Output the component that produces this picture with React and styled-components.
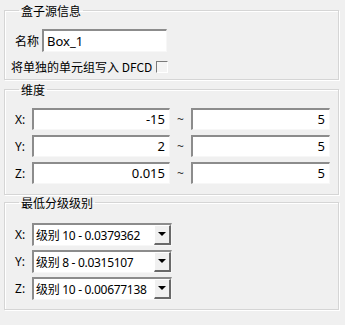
import styled, {createGlobalStyle} from "styled-components";

const GlobalStyle = createGlobalStyle`
  html, body {
    margin: 0;
    padding: 0;
    background: #f0f0f0;
  }
  body {
    font-family: "Noto Sans", "Noto Sans CJK SC", sans-serif;
    font-size: 12px;
    color: #000;
  }
`

const dims = [
    {axis: "X", min: "-15", max: "5"},
    {axis: "Y", min: "2", max: "5"},
    {axis: "Z", min: "0.015", max: "5"},
];

const levels = [
    {axis: "X", value: "级别 10 - 0.0379362"},
    {axis: "Y", value: "级别 8 - 0.0315107"},
    {axis: "Z", value: "级别 10 - 0.00677138"},
];

function App() {
    return (
        <Page>
            <GlobalStyle/>
            <Group $height={78}>
                <Legend>盒子源信息</Legend>
                <NameRow>
                    <Label>名称</Label>
                    <TextBox $width={125} $height={23}>Box_1</TextBox>
                </NameRow>
                <CheckRow>
                    <span>将单独的单元组写入 DFCD</span>
                    <CheckBox/>
                </CheckRow>
            </Group>

            <Group $height={114}>
                <Legend>维度</Legend>
                <Rows $top={10}>
                    {dims.map((d) => (
                        <Row key={d.axis}>
                            <Axis>{d.axis}:</Axis>
                            <TextBox $width={138} $height={22} $right>{d.min}</TextBox>
                            <Tilde>~</Tilde>
                            <TextBox $width={139} $height={22} $right>{d.max}</TextBox>
                        </Row>
                    ))}
                </Rows>
            </Group>

            <Group $height={116} $shift={-2}>
                <Legend>最低分级级别</Legend>
                <Rows $top={12}>
                    {levels.map((l) => (
                        <Row key={l.axis}>
                            <Axis>{l.axis}:</Axis>
                            <Select>
                                <SelectText>{l.value}</SelectText>
                                <DropButton>
                                    <svg width="8" height="4" viewBox="0 0 8 4">
                                        <path d="M0 0h8L4 4z" fill="#000"/>
                                    </svg>
                                </DropButton>
                            </Select>
                        </Row>
                    ))}
                </Rows>
            </Group>
        </Page>
    )
}

export default App

const Page = styled.div`
  width: 345px;
  height: 325px;
  box-sizing: border-box;
  padding: 2px 6px 0 4px;
  display: flex;
  flex-direction: column;
  gap: 1px;
  overflow: hidden;
`
const Group = styled.fieldset`
  margin: ${(p) => p.$shift || 0}px 0 0 0;
  padding: 0 0 0 10px;
  height: ${(p) => p.$height}px;
  box-sizing: border-box;
  border: 1px solid #d5d5d5;
  box-shadow: 1px 1px 0 #fff, inset 1px 1px 0 #fff;
  min-width: 0;
`
const Legend = styled.legend`
  padding: 0 2px;
  margin-left: 4px;
  line-height: 17px;
  font-family: "Noto Sans CJK SC", sans-serif;
  color: #000;
`
const NameRow = styled.div`
  display: flex;
  align-items: center;
  gap: 3px;
  margin-top: 10px;
`
const Label = styled.span`
  font-family: "Noto Sans CJK SC", sans-serif;
`
const TextBox = styled.div`
  width: ${(p) => p.$width}px;
  height: ${(p) => p.$height}px;
  box-sizing: border-box;
  background: #fff;
  border-top: 2px solid #8c8c8c;
  border-left: 2px solid #8c8c8c;
  border-bottom: 1px solid #f7f7f7;
  border-right: 1px solid #f7f7f7;
  display: flex;
  align-items: center;
  justify-content: ${(p) => (p.$right ? "flex-end" : "flex-start")};
  padding: 0 4px 0 3px;
  font-size: 13px;
  line-height: 1;
`
const CheckRow = styled.div`
  display: flex;
  align-items: center;
  gap: 4px;
  margin: 6px 0 0 -4px;
  font-family: "Noto Sans CJK SC", sans-serif;
`
const CheckBox = styled.div`
  width: 12px;
  height: 12px;
  box-sizing: border-box;
  background: #f4f4f4;
  border-top: 1px solid #7a7a7a;
  border-left: 1px solid #7a7a7a;
  border-bottom: 1px solid #fff;
  border-right: 1px solid #fff;
`
const Rows = styled.div`
  display: flex;
  flex-direction: column;
  gap: 5px;
  margin-top: ${(p) => p.$top}px;
`
const Row = styled.div`
  display: flex;
  align-items: center;
  height: 22px;
`
const Axis = styled.span`
  width: 17px;
  font-size: 12px;
`
const Tilde = styled.span`
  width: 21px;
  text-align: center;
  color: #333;
`
const Select = styled.div`
  width: 140px;
  height: 23px;
  box-sizing: border-box;
  background: #fff;
  border-top: 2px solid #8c8c8c;
  border-left: 2px solid #8c8c8c;
  border-bottom: 1px solid #f7f7f7;
  border-right: 1px solid #f7f7f7;
  display: flex;
  align-items: stretch;
`
const SelectText = styled.div`
  flex: 1;
  display: flex;
  align-items: center;
  padding-left: 2px;
  font-family: "Noto Sans", "Noto Sans CJK SC", sans-serif;
  font-size: 12px;
  letter-spacing: -0.3px;
  white-space: nowrap;
  overflow: hidden;
`
const DropButton = styled.div`
  width: 17px;
  box-sizing: border-box;
  background: #f0f0f0;
  border-top: 1px solid #fff;
  border-left: 1px solid #fff;
  border-bottom: 2px solid #696969;
  border-right: 2px solid #696969;
  display: flex;
  align-items: center;
  justify-content: center;
`
